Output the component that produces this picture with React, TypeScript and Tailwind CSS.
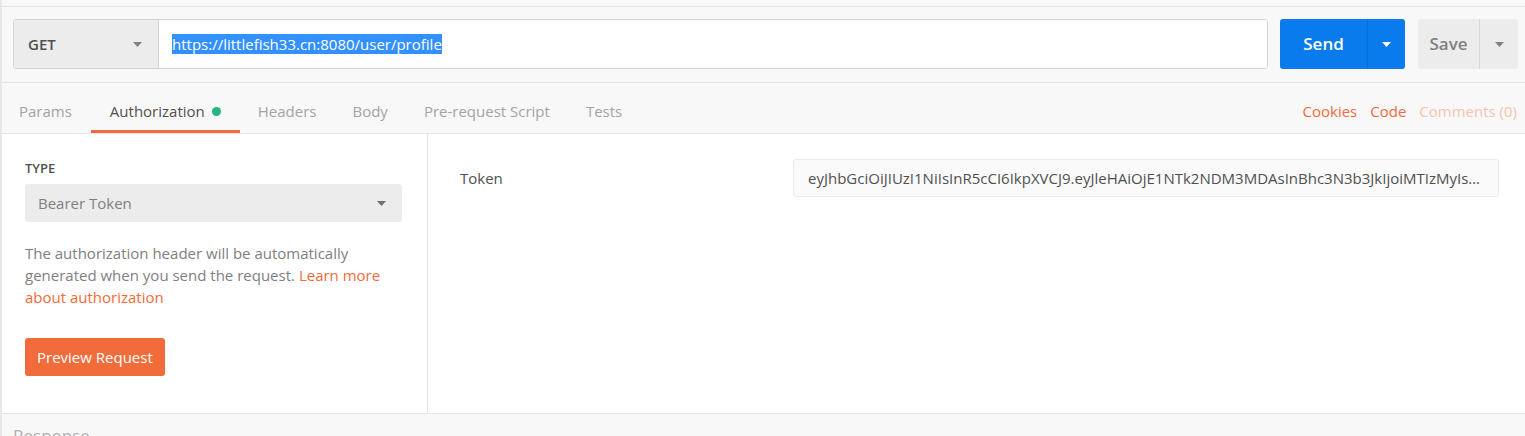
const font = { fontFamily: '"Open Sans", "Noto Sans", sans-serif' };

function Caret({ color }: { color: string }) {
  return (
    <svg width="9" height="5" viewBox="0 0 9 5">
      <path d="M0 0 H9 L4.5 5 Z" fill={color} />
    </svg>
  );
}

const tabs = ["Params", "Authorization", "Headers", "Body", "Pre-request Script", "Tests"];

export default function App() {
  return (
    <div
      style={font}
      className="w-[1525px] h-[436px] overflow-hidden bg-[#f8f8f8] border-l-2 border-[#e8e8e8] flex flex-col"
    >
      <div className="h-[7px] border-b border-[#e6e6e6] shrink-0" />

      {/* request bar */}
      <div className="flex items-stretch pl-[11px] pr-[7px] pt-[12px] pb-[13px] border-b border-[#e6e6e6] shrink-0">
        <div className="flex-1 flex h-[50px] rounded-[3px] border border-[#d4d4d4] overflow-hidden">
          <div className="w-[145px] bg-[#ececec] border-r border-[#d4d4d4] flex items-center justify-between pl-[14px] pr-[16px]">
            <span className="text-[15px] font-semibold text-[#505050]">GET</span>
            <Caret color="#808080" />
          </div>
          <div className="flex-1 bg-white flex items-center pl-[13px]">
            <span className="bg-[#3390ff] text-white text-[15px] leading-[20px]">
              https://littlefish33.cn:8080/user/profile
            </span>
          </div>
        </div>
        <div className="ml-[12px] flex h-[50px] rounded-[3px] bg-[#097bed] overflow-hidden">
          <div className="w-[87px] flex items-center justify-center text-white text-[17px] font-semibold">Send</div>
          <div className="w-[38px] border-l border-[#0a6fd4] flex items-center justify-center">
            <Caret color="#ffffff" />
          </div>
        </div>
        <div className="ml-[13px] flex h-[50px] rounded-[3px] bg-[#ececec] overflow-hidden">
          <div className="w-[61px] flex items-center justify-center text-[#808080] text-[17px] font-semibold">Save</div>
          <div className="w-[39px] border-l border-[#d8d8d8] flex items-center justify-center">
            <Caret color="#808080" />
          </div>
        </div>
      </div>

      {/* tabs */}
      <div className="h-[51px] flex justify-between border-b border-[#e6e6e6] shrink-0">
        <div className="flex h-full">
          {tabs.map((t, i) => {
            const active = t === "Authorization";
            return (
              <div
                key={t}
                className={
                  "h-full flex items-center pt-[10px] text-[15px] " +
                  (i === 0 ? "pl-[17px] pr-[19px] " : active ? "pl-[19px] pr-[19px] " : "px-[18px] ") +
                  (active
                    ? "text-[#505050] border-b-[3px] border-[#f26b3a]"
                    : "text-[#a3a3a3] border-b-[3px] border-transparent")
                }
              >
                {t}
                {active && <span className="ml-[7px] w-[9px] h-[9px] rounded-full bg-[#26b47f]" />}
              </div>
            );
          })}
        </div>
        <div className="flex items-center gap-[13px] pr-[8px] text-[15px] pt-[7px]">
          <span className="text-[#f26b3a]">Cookies</span>
          <span className="text-[#f26b3a]">Code</span>
          <span className="text-[#f9c3ae]">Comments (0)</span>
        </div>
      </div>

      {/* content */}
      <div className="h-[280px] flex bg-white border-b border-[#e6e6e6] shrink-0">
        <div className="w-[426px] shrink-0 border-r border-[#e6e6e6] pl-[23px] pr-[25px] pt-[26px]">
          <div className="text-[13px] leading-[16px] font-semibold text-[#505050]">TYPE</div>
          <div className="mt-[8px] h-[38px] rounded-[3px] bg-[#ececec] flex items-center justify-between pl-[13px] pr-[16px]">
            <span className="text-[15px] text-[#808080]">Bearer Token</span>
            <Caret color="#707070" />
          </div>
          <p className="mt-[20px] text-[15px] leading-[22px] text-[#808080]">
            The authorization header will be automatically generated when you send the request.{" "}
            <span className="text-[#f26b3a]">Learn more about authorization</span>
          </p>
          <button className="mt-[30px] h-[38px] px-[12px] rounded-[3px] bg-[#f26b3a] text-white text-[15px]">
            Preview Request
          </button>
        </div>
        <div className="flex-1 min-w-0 flex items-start pl-[32px] pr-[26px] pt-[25px]">
          <div className="w-[333px] shrink-0 h-[38px] flex items-center text-[15px] text-[#505050]">Token</div>
          <div className="flex-1 min-w-0 h-[38px] rounded-[3px] bg-[#fafafa] border border-[#ebebeb] flex items-center px-[14px]">
            <span className="truncate text-[15px] text-[#505050]">
              eyJhbGciOiJIUzI1NiIsInR5cCI6IkpXVCJ9.eyJleHAiOjE1NTk2NDM3MDAsInBhc3N3b3JkIjoiMTIzMyIsInVzZXJuYW1lIjoibGl0dGxlZmlzaCJ9.abc
            </span>
          </div>
        </div>
      </div>

      {/* response */}
      <div className="flex-1 pl-[11px] pt-[9px] text-[17px] text-[#b0b0b0]">Response</div>
    </div>
  );
}
